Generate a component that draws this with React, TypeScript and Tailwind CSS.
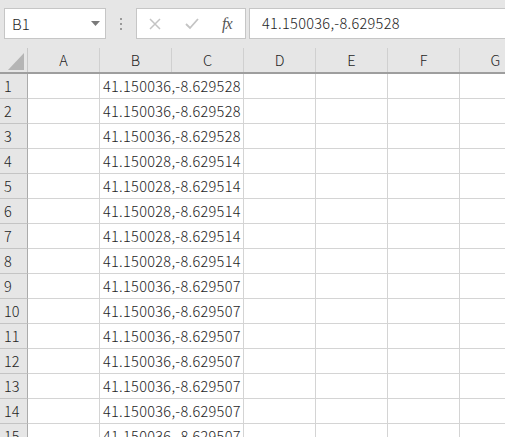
import React from "react";

const rows: string[] = [
  "41.150036,-8.629528",
  "41.150036,-8.629528",
  "41.150036,-8.629528",
  "41.150028,-8.629514",
  "41.150028,-8.629514",
  "41.150028,-8.629514",
  "41.150028,-8.629514",
  "41.150028,-8.629514",
  "41.150036,-8.629507",
  "41.150036,-8.629507",
  "41.150036,-8.629507",
  "41.150036,-8.629507",
  "41.150036,-8.629507",
  "41.150036,-8.629507",
  "41.150036,-8.629507",
];

const cols = ["A", "B", "C", "D", "E", "F", "G"];

export default function App() {
  return (
    <div className="w-[505px] h-[437px] overflow-hidden bg-[#e6e6e6] text-[#1e1e1e] font-light font-['Noto_Sans_CJK_JP','Noto_Sans',sans-serif]">
      {/* Toolbar */}
      <div className="h-[48px] flex items-start pt-[8px] pl-[4px]">
        <div className="w-[102px] h-[31px] bg-white border border-[#c6c6c6] flex items-center justify-between pl-[7px] pr-[5px]">
          <span className="text-[15px] leading-none">B1</span>
          <svg width="9" height="5" viewBox="0 0 9 5">
            <path d="M0 0 H9 L4.5 5 Z" fill="#7a7a7a" />
          </svg>
        </div>
        <div className="w-[30px] h-[31px] flex flex-col items-center justify-center gap-[3px]">
          <div className="w-[2px] h-[2px] bg-[#9a9a9a]" />
          <div className="w-[2px] h-[2px] bg-[#9a9a9a]" />
          <div className="w-[2px] h-[2px] bg-[#9a9a9a]" />
        </div>
        <div className="w-[110px] h-[31px] bg-white border border-[#c6c6c6] flex items-center pl-[12px]">
          <svg width="12" height="12" viewBox="0 0 12 12" className="mr-[24px]">
            <path d="M1 1 L11 11 M11 1 L1 11" stroke="#c4c4c4" strokeWidth="1.5" />
          </svg>
          <svg width="14" height="12" viewBox="0 0 14 12" className="mr-[23px]">
            <path d="M1 6 L5 10 L13 1" stroke="#c4c4c4" strokeWidth="1.8" fill="none" />
          </svg>
          <span className="text-[16px] italic font-normal text-[#555] font-['Liberation_Serif',serif] leading-none tracking-[-1px]">
            fx
          </span>
        </div>
        <div className="ml-[3px] flex-1 h-[31px] bg-white border border-r-0 border-[#c6c6c6] flex items-center pl-[12px]">
          <span className="text-[14.5px] leading-none whitespace-nowrap tracking-[0.3px]">41.150036,-8.629528</span>
        </div>
      </div>

      {/* Column header */}
      <div className="flex h-[26px] border-b-2 border-[#9e9e9e] bg-[#e6e6e6]">
        <div className="w-[28px] shrink-0 border-r border-[#c8c8c8] relative">
          <svg width="17" height="17" viewBox="0 0 17 17" className="absolute left-[8px] top-[5px]">
            <path d="M16 0 V17 H0 Z" fill="#b5b5b5" />
          </svg>
        </div>
        {cols.map((c) => (
          <div
            key={c}
            className="w-[72px] shrink-0 border-r border-[#d0d0d0] flex items-center justify-center text-[14.5px]"
          >
            {c}
          </div>
        ))}
      </div>

      {/* Rows */}
      {rows.map((v, i) => (
        <div key={i} className="flex h-[25px] bg-white">
          <div className="w-[28px] shrink-0 bg-[#e6e6e6] border-r border-b border-r-[#ababab] border-b-[#c4c4c4] flex items-center pl-[4px] text-[14.5px]">
            {i + 1}
          </div>
          <div className="w-[72px] shrink-0 border-r border-b border-[#d4d4d4]" />
          <div className="w-[72px] shrink-0 border-b border-[#d4d4d4] flex items-center pl-[3px] text-[14.5px] whitespace-nowrap overflow-visible tracking-[0.3px]">
            {v}
          </div>
          <div className="w-[72px] shrink-0 border-r border-b border-[#d4d4d4]" />
          <div className="w-[72px] shrink-0 border-r border-b border-[#d4d4d4]" />
          <div className="w-[72px] shrink-0 border-r border-b border-[#d4d4d4]" />
          <div className="w-[72px] shrink-0 border-r border-b border-[#d4d4d4]" />
          <div className="w-[72px] shrink-0 border-r border-b border-[#d4d4d4]" />
        </div>
      ))}
    </div>
  );
}
